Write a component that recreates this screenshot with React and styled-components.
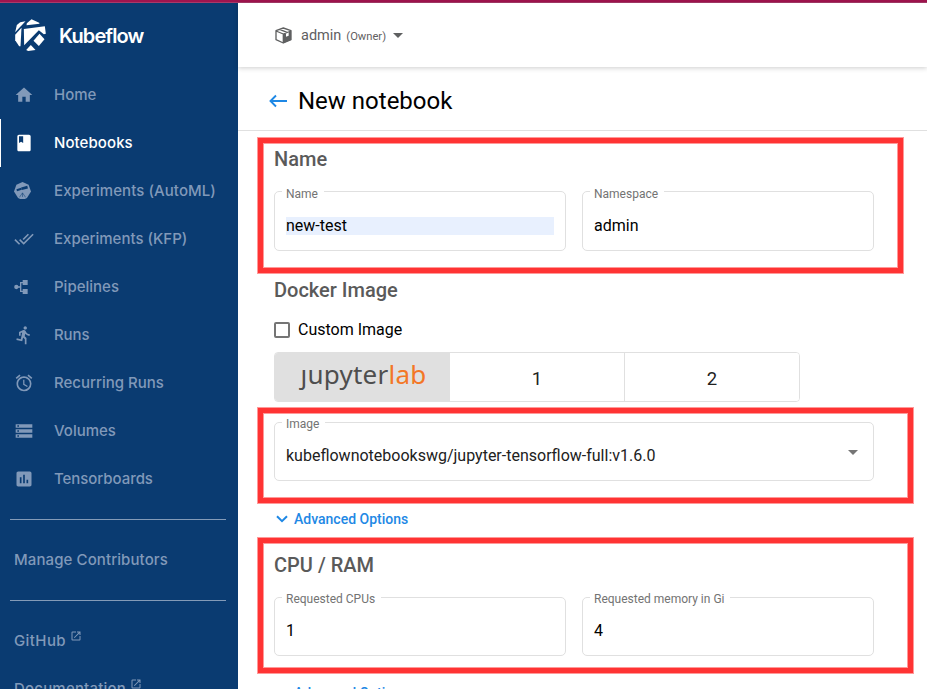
import React from "react";
import styled, { createGlobalStyle, css } from "styled-components";
import {
  MdHome, MdBook, MdDoneAll, MdDirectionsRun, MdAccessAlarm, MdStorage,
  MdAssessment, MdLaunch, MdArrowDropDown,
} from "react-icons/md";

const Global = createGlobalStyle`
  *, *::before, *::after { box-sizing: border-box; }
  html, body { margin: 0; background: #fff; overflow: hidden; }
  body { font-family: Roboto, "Liberation Sans", sans-serif; color: #000; }
`;

const Page = styled.div`
  position: relative;
  width: 927px;
  height: 689px;
  overflow: hidden;
  display: flex;
  flex-direction: column;
`;
const TopStripe = styled.div`
  flex: none;
  height: 3px;
  background: #a0144e;
  border-bottom: 1px solid #a83a69;
`;
const Body = styled.div`
  display: flex;
  flex: 1;
  min-height: 0;
`;

const Sidebar = styled.aside`
  width: 238px;
  flex: none;
  background: #0a3b71;
  overflow: hidden;
  font-family: Inter, sans-serif;
`;
const Brand = styled.div`
  display: flex;
  align-items: center;
  height: 64px;
  margin-bottom: 4px;
  padding-left: 15px;
  gap: 13px;
  color: #fff;
  svg { flex: none; }
`;
const BrandName = styled.span`
  margin-top: 1px;
  font-size: 20px;
  font-weight: 600;
  letter-spacing: -0.9px;
`;
const NavItem = styled.a`
  display: flex;
  align-items: center;
  height: 48px;
  padding-left: 13px;
  border-left: 1px solid ${(p) => (p.$active ? "#fff" : "transparent")};
  color: ${(p) => (p.$active ? "#fff" : "#8199b9")};
  svg { flex: none; }
`;
const NavIcon = styled.span`
  display: flex;
  width: 40px;
`;
const NavLabel = styled.span`
  font-size: 15px;
  font-weight: 500;
  line-height: 20px;
  white-space: nowrap;
  letter-spacing: ${(p) => p.$ls || 0}px;
`;
const External = styled.span`
  display: flex;
  margin: -10px 0 0 4px;
`;
const Divider = styled.div`
  height: 1px;
  margin: 16px 12px 16px 10px;
  background: #849bb8;
`;

const Main = styled.main`
  flex: 1;
  min-width: 0;
`;
const Header = styled.header`
  position: relative;
  display: flex;
  align-items: center;
  height: 64px;
  padding-left: 37px;
  color: #5f6061;
  box-shadow: 0 1px 5px rgba(0, 0, 0, 0.2);
`;
const Namespace = styled.span`
  margin-left: 9px;
  font-size: 14.5px;
`;
const Role = styled.span`
  margin: 2px 0 0 5px;
  font-size: 11.2px;
`;
const TitleBar = styled.div`
  display: flex;
  align-items: center;
  height: 64px;
  padding: 5px 0 0 30px;
  border-bottom: 1px solid #e0e0e0;
`;
const Title = styled.h1`
  margin: 0 0 0 10px;
  font-size: 24px;
  font-weight: 400;
  line-height: 32px;
`;
const Form = styled.div`
  display: flex;
  flex-direction: column;
  padding-left: 36px;
`;
const SectionTitle = styled.h2`
  margin: ${(p) => p.$top}px 0 0;
  font-size: 20px;
  font-weight: 500;
  line-height: 24px;
  color: #5a5a5a;
`;
const FieldRow = styled.div`
  display: flex;
  gap: 16px;
  margin-top: ${(p) => p.$top}px;
`;
const FieldBox = styled.div`
  position: relative;
  display: flex;
  align-items: center;
  justify-content: space-between;
  width: ${(p) => p.$w || 292}px;
  height: ${(p) => p.$h || 59}px;
  padding: 9px 11px 0;
  border: 1px solid #e0e0e0;
  border-radius: 5px;
`;
const FieldLabel = styled.span`
  position: absolute;
  top: ${(p) => p.$top}px;
  left: 7px;
  padding: 0 6px 0 4px;
  background: #fff;
  color: #737373;
  font-size: 12px;
  line-height: 14px;
`;
const Value = styled.span`
  flex: 1;
  font-size: 16px;
  line-height: 18px;
  color: ${(p) => (p.$soft ? "#212121" : "#000")};
  ${(p) => p.$filled && css`background: #e8f0fe;`}
`;
const SelectArrow = styled.svg`
  margin: -8px 4px 0 0;
`;
const CheckRow = styled.label`
  display: flex;
  align-items: center;
  height: 20px;
  margin-top: 18px;
  font-size: 16px;
`;
const CheckBox = styled.span`
  width: 16px;
  height: 16px;
  margin-right: 8px;
  border: 2px solid #757575;
  border-radius: 2px;
`;
const CheckText = styled.span`
  margin-top: -2px;
`;
const ToggleGroup = styled.div`
  display: flex;
  width: 526px;
  height: 50px;
  margin-top: 12px;
  border: 1px solid #e0e0e0;
  border-radius: 4px;
  overflow: hidden;
`;
const Toggle = styled.div`
  display: flex;
  align-items: center;
  justify-content: center;
  flex: none;
  width: ${(p) => (p.$on ? 174 : 175)}px;
  padding-top: 3px;
  font-size: 18.5px;
  color: #212121;
  background: ${(p) => (p.$on ? "#e0e0e0" : "#fff")};
  & + & { border-left: 1px solid #e0e0e0; }
`;
const JupyterMark = styled.span`
  font-family: "Noto Sans", sans-serif;
  font-size: 26px;
  line-height: 36px;
  margin: -9px 0 0 3px;
  letter-spacing: 0.25px;
  color: #4e4e4e;
`;
const Lab = styled.span`
  color: #f37726;
`;
const Advanced = styled.button`
  display: flex;
  align-items: center;
  height: 20px;
  margin: ${(p) => p.$top}px 0 0 2px;
  padding: 0;
  border: 0;
  background: none;
  color: #1e88e5;
  font: 500 14px/20px Roboto, sans-serif;
  svg { margin-right: 6px; }
`;
const Highlight = styled.div`
  position: absolute;
  left: 258px;
  top: ${(p) => p.$top}px;
  width: ${(p) => p.$w}px;
  height: ${(p) => p.$h}px;
  border: 5px solid #ff3333;
  box-shadow: 0 0 0 1px #ff9999, inset 0 0 0 1px #ff9999;
  pointer-events: none;
`;

const KubeflowLogo = () => (
  <svg width="31" height="32" viewBox="45 57 92 96" fill="currentColor">
    <path d="M45 97 50 75 60 67 76 64z" />
    <path d="M79 76 80 70 94 57.500 117 68 118 71z" />
    <path d="M71 87 134 79 137 101 131 103 116 91 72 136z" />
    <path d="M45 104 64 83 61 139 57 139 45 121z" />
    <path d="M118 101 133 118 116 138 100 122z" />
    <path d="M78 150 92 135 106 150 84 153z" />
  </svg>
);
const KatibIcon = () => (
  <svg width="17" height="18" viewBox="0 0 50 53">
    <path fill="currentColor" d="M25 0 43 8 50 28 38 47 32 50H18L12 47 0 28 7 8z" />
    <path fill="none" stroke="#0a3b71" strokeWidth="6" d="M8 24 22 20" />
    <path fill="none" stroke="#0a3b71" strokeWidth="8" d="M22 20 40 15" />
    <path fill="none" stroke="#0a3b71" strokeOpacity="0.7" strokeWidth="2.200" d="M25 32 16 45M25 32V44M25 32 34 45" />
  </svg>
);
const PipelineIcon = () => (
  <svg width="14" height="14" viewBox="0 0 42 42" fill="currentColor">
    <circle cx="7" cy="21" r="6.500" />
    <path d="M26 0h15v15H26zM26 27h15v15H26z" />
    <path fill="none" stroke="currentColor" strokeWidth="4" d="M10 21h10M28 8h-8v26h8" />
  </svg>
);
const PackageIcon = () => (
  <svg width="17" height="17" viewBox="0 0 51 51">
    <path fill="none" stroke="currentColor" strokeWidth="4" strokeLinejoin="round" d="M25 3 48 11V38L25 48 3 38V11zM3 12 25 21 48 12M25 21V48M14 7 36 16" />
    <path fill="currentColor" d="M26 22 33 19v10l8-3V16l7-3v26L26 48z" />
  </svg>
);
const BackArrow = () => (
  <svg width="20" height="14" viewBox="0 0 20 14" fill="none" stroke="#1e88e5" strokeWidth="1.900">
    <path d="M19 7H2.500M8 1.500 2.500 7 8 12.500" />
  </svg>
);
const Chevron = () => (
  <svg width="12" height="8" viewBox="0 0 12 8" fill="none" stroke="currentColor" strokeWidth="2">
    <path d="M1 1.200 6 6.200 11 1.200" />
  </svg>
);

const NAV = [
  ["Home", <MdHome size={20} />, 0],
  ["Notebooks", <MdBook size={20} />, 0.08],
  ["Experiments (AutoML)", <KatibIcon />, 0.08],
  ["Experiments (KFP)", <MdDoneAll size={20} />, 0],
  ["Pipelines", <PipelineIcon />, 0],
  ["Runs", <MdDirectionsRun size={20} />, -0.1],
  ["Recurring Runs", <MdAccessAlarm size={20} />, 0],
  ["Volumes", <MdStorage size={20} />, 0],
  ["Tensorboards", <MdAssessment size={20} />, -0.05],
];
const LINKS = [
  ["GitHub", 0.4],
  ["Documentation", 0.2],
];

const Field = ({ label, value, width, height, filled, select }) => (
  <FieldBox $w={width} $h={height}>
    <FieldLabel $top={height === 60 ? -5 : -6}>{label}</FieldLabel>
    <Value $filled={filled} $soft={select}>{value}</Value>
    {select && (
      <SelectArrow width="10" height="5" viewBox="0 0 10 5"><path fill="#757575" d="M0 0h10L5 5z" /></SelectArrow>
    )}
  </FieldBox>
);

export default function App() {
  return (
    <>
      <Global />
      <Page>
        <TopStripe />
        <Body>
          <Sidebar>
            <Brand>
              <KubeflowLogo />
              <BrandName>Kubeflow</BrandName>
            </Brand>
            {NAV.map(([label, icon, ls]) => (
              <NavItem key={label} $active={label === "Notebooks"}>
                <NavIcon>{icon}</NavIcon>
                <NavLabel $ls={ls}>{label}</NavLabel>
              </NavItem>
            ))}
            <Divider />
            <NavItem><NavLabel $ls={0.1}>Manage Contributors</NavLabel></NavItem>
            <Divider />
            {LINKS.map(([label, ls]) => (
              <NavItem key={label}>
                <NavLabel $ls={ls}>{label}</NavLabel>
                <External><MdLaunch size={12} /></External>
              </NavItem>
            ))}
          </Sidebar>
          <Main>
            <Header>
              <PackageIcon />
              <Namespace>admin</Namespace>
              <Role>(Owner)</Role>
              <MdArrowDropDown size={24} />
            </Header>
            <TitleBar>
              <BackArrow />
              <Title>New notebook</Title>
            </TitleBar>
            <Form>
              <SectionTitle $top={16}>Name</SectionTitle>
              <FieldRow $top={20}>
                <Field label="Name" value="new-test" height={60} filled />
                <Field label="Namespace" value="admin" height={60} />
              </FieldRow>
              <SectionTitle $top={27}>Docker Image</SectionTitle>
              <CheckRow><CheckBox /><CheckText>Custom Image</CheckText></CheckRow>
              <ToggleGroup>
                <Toggle $on><JupyterMark>ȷupyter<Lab>lab</Lab></JupyterMark></Toggle>
                <Toggle>1</Toggle>
                <Toggle>2</Toggle>
              </ToggleGroup>
              <FieldRow $top={20}>
                <Field label="Image" value="kubeflownotebookswg/jupyter-tensorflow-full:v1.6.0" width={600} select />
              </FieldRow>
              <Advanced $top={28}><Chevron />Advanced Options</Advanced>
              <SectionTitle $top={24}>CPU / RAM</SectionTitle>
              <FieldRow $top={20}>
                <Field label="Requested CPUs" value="1" />
                <Field label="Requested memory in Gi" value="4" />
              </FieldRow>
              <Advanced $top={27}><Chevron />Advanced Options</Advanced>
            </Form>
          </Main>
        </Body>
        <Highlight $top={138} $w={645} $h={135} />
        <Highlight $top={408} $w={655} $h={95} />
        <Highlight $top={538} $w={655} $h={135} />
      </Page>
    </>
  );
}
